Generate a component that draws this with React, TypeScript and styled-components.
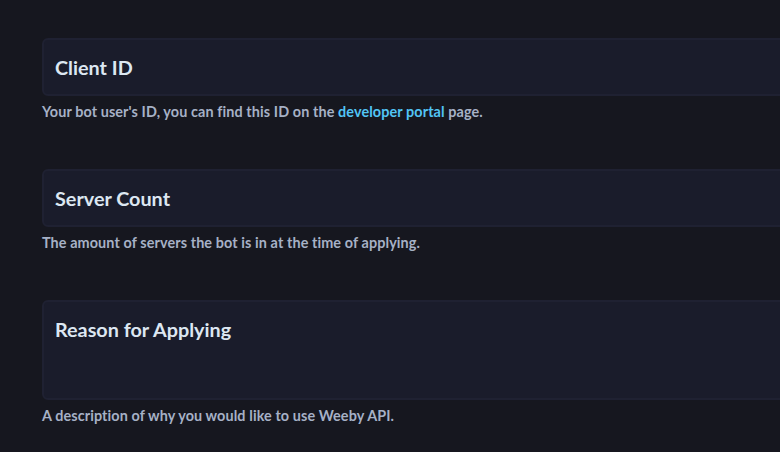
import * as React from "react";
import styled, { createGlobalStyle } from "styled-components";

const GlobalStyle = createGlobalStyle`
  html, body {
    margin: 0;
    padding: 0;
    background: #16171f;
    overflow: hidden;
  }
  body {
    font-family: Lato, "Open Sans", sans-serif;
  }
`;

const Page = styled.div`
  width: 780px;
  height: 452px;
  padding: 38px 0 0 42px;
  box-sizing: border-box;
  overflow: hidden;
  display: flex;
  flex-direction: column;
  gap: 45px;
`;

const Field = styled.div`
  display: flex;
  flex-direction: column;
  width: 820px;
`;

const InputBox = styled.div<{ $tall?: boolean }>`
  box-sizing: border-box;
  height: ${(p) => (p.$tall ? 100 : 58)}px;
  background: #1a1c2b;
  border: 2px solid #1f2132;
  border-radius: 6px;
  padding: 15px 11px;
`;

const Label = styled.div`
  color: #dde7f2;
  font-size: 19.8px;
  font-weight: 700;
  line-height: 24px;
`;

const Help = styled.div`
  margin-top: 4px;
  color: #a6b1c6;
  font-size: 14.4px;
  font-weight: 700;
  letter-spacing: 0.1px;
  line-height: 24px;
`;

const HelpLink = styled.a`
  color: #52c5f5;
  text-decoration: none;
`;

export default function App() {
  return (
    <>
      <GlobalStyle />
      <Page>
        <Field>
          <InputBox>
            <Label>Client ID</Label>
          </InputBox>
          <Help>
            Your bot user's ID, you can find this ID on the{" "}
            <HelpLink href="#">developer portal</HelpLink> page.
          </Help>
        </Field>
        <Field>
          <InputBox>
            <Label>Server Count</Label>
          </InputBox>
          <Help>The amount of servers the bot is in at the time of applying.</Help>
        </Field>
        <Field>
          <InputBox $tall>
            <Label>Reason for Applying</Label>
          </InputBox>
          <Help>A description of why you would like to use Weeby API.</Help>
        </Field>
      </Page>
    </>
  );
}
